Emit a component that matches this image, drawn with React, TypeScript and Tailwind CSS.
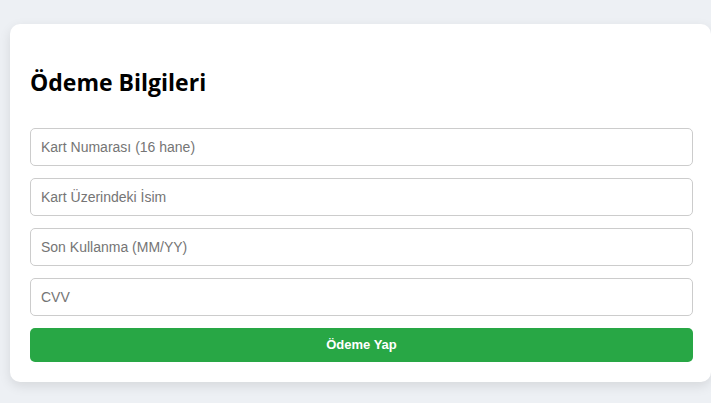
export default function App() {
  const fields = [
    'Kart Numarası (16 hane)',
    'Kart Üzerindeki İsim',
    'Son Kullanma (MM/YY)',
    'CVV',
  ];

  return (
    <div className="min-h-screen w-full overflow-hidden bg-[#edf0f4] pl-[10px] pt-[24px]">
      <div className="w-[701px] rounded-[10px] bg-white px-[20px] pb-[20px] pt-[40px] shadow-[0_4px_12px_rgba(0,0,0,0.1)]">
        <h2 className="mb-[28px] font-['Open_Sans',sans-serif] text-[23px] font-bold leading-[36px] text-black">
          Ödeme Bilgileri
        </h2>
        <form className="flex flex-col gap-[12px]" onSubmit={(e) => e.preventDefault()}>
          {fields.map((f) => (
            <input
              key={f}
              type="text"
              placeholder={f}
              className="h-[38px] w-[663px] rounded-[5px] border border-[#cccccc] px-[10px] font-['Liberation_Sans',Arial,sans-serif] text-[14px] text-black placeholder:text-[#757575] outline-none"
            />
          ))}
          <button
            type="submit"
            className="h-[34px] w-[663px] rounded-[5px] bg-[#28a745] font-['Liberation_Sans',Arial,sans-serif] text-[13px] font-bold text-white"
          >
            Ödeme Yap
          </button>
        </form>
      </div>
    </div>
  );
}
